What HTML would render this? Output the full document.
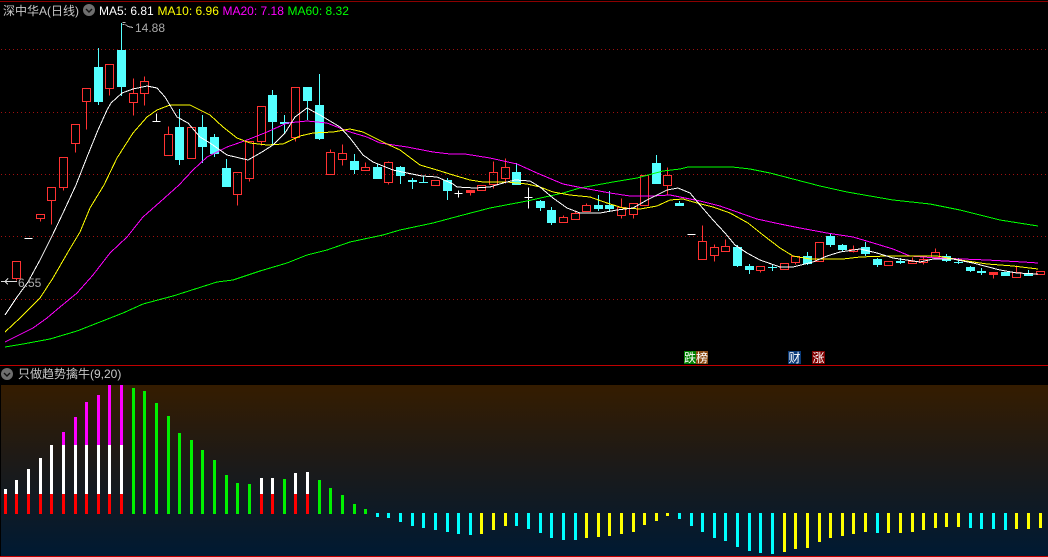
<!DOCTYPE html>
<html><head><meta charset="utf-8"><style>
html,body{margin:0;padding:0;background:#000;width:1048px;height:557px;overflow:hidden}
svg{display:block;position:absolute;left:0;top:0}
text{font-family:"Liberation Sans","WenQuanYi Zen Hei","Noto Sans CJK SC",sans-serif;font-size:12px}
</style></head><body>
<svg width="1048" height="557" viewBox="0 0 1048 557" xmlns="http://www.w3.org/2000/svg" shape-rendering="crispEdges">
<defs><linearGradient id="g" x1="0" y1="0" x2="0" y2="1"><stop offset="0" stop-color="#351c00"/><stop offset=".5" stop-color="#1a1a1a"/><stop offset="1" stop-color="#001a33"/></linearGradient></defs>
<rect width="1048" height="557" fill="#000"/>
<rect x="1" y="385" width="1047" height="171" fill="url(#g)"/>
<path d="M0 1.5H1048" stroke="#8b0000"/>
<path d="M0 365.5H1048M0 556.5H1048" stroke="#c00000"/>
<path d="M1 49.5H1048M1 112.5H1048M1 174.5H1048M1 236.5H1048M1 299.5H1048" stroke="#a01010" stroke-dasharray="1 3"/>

<!-- red candles -->
<g transform="translate(.5 .5)" fill="none" stroke="#ff3232">
<path d="M12 261H20V278H12ZM16 278V280M36 214H44V218H36ZM40 218V221M47 187H55V200H47ZM51 200V224M59 157H67V187H59ZM63 187V190M71 124H79V143H71ZM75 143V152M82 88H90V101H82ZM86 101V129M105 64H113V88H105ZM109 88V95M129 93H137V102H129ZM133 78V93M133 102V115M140 81H148V93H140ZM144 76V81M144 93V105M164 134H172V155H164ZM168 126V134M187 127H195V158H187ZM233 172H241V194H233ZM237 194V205M245 141H253V178H245ZM249 178V181M257 106H265V141H257ZM261 141V145M291 87H299V137H291ZM295 137V141M326 152H334V174H326ZM330 149V152M338 153H346V159H338ZM342 144V153M342 159V165M361 167H369V170H361ZM365 162V167M384 162H392V182H384ZM388 161V162M388 182V184M431 180H439V185H431ZM477 185H485V190H477ZM489 172H497V184H489ZM493 161V172M493 184V188M501 167H509V178H501ZM505 158V167M505 178V183M559 217H567V222H559ZM563 215V217M571 213H579V219H571ZM575 210V213M582 205H590V211H582ZM586 203V205M617 207H625V215H617ZM621 198V207M621 215V218M629 203H637V214H629ZM633 214V218M640 175H648V205H640ZM663 175H671V185H663ZM667 167V175M667 185V194M698 241H706V259H698ZM702 225V241M710 247H718V255H710ZM714 244V247M714 255V261M721 246H729V251H721ZM725 239V246M756 266H764V270H756ZM760 270V272M780 263H788V269H780ZM791 256H799V262H791ZM795 262V264M815 242H823V261H815ZM849 249H857V251H849ZM853 245V249M853 251V252M884 261H892V265H884ZM908 261H916V263H908ZM912 257V261M919 259H927V262H919ZM923 256V259M923 262V264M931 252H939V257H931ZM935 248V252M1012 272H1020V277H1012ZM1016 265V272M1036 271H1044V274H1036Z"/>
<path d="M466 190H474V192H466ZM470 192V195M989 272H997V274H989ZM993 274V278" fill="#ff3232"/>
</g>

<!-- cyan candles -->
<g transform="translate(.5 0)" fill="none" stroke="#54ffff">
<path stroke-width="9" d="M98 67V102M121 50V87M179 127V160M202 127V147M214 137V154M226 168V187M272 95V122M284 122V124M307 87V101M319 105V139M354 161V170M377 167V179M400 167V176M412 180V182M423 182V183M447 180V191M516 172V185M540 201V208M551 210V223M598 205V209M609 205V209M656 163V184M679 203V206M737 247V266M749 266V270M772 267V268M807 256V264M830 236V245M842 245V250M865 247V254M877 259V265M900 261V263M946 256V261M958 262V263M970 267V271M981 271V273M1005 272V276M1028 273V276"/>
<path d="M98 48V105M121 23V96M179 109V165M202 115V163M214 134V157M226 159V187M272 90V145M284 115V133M307 101V120M319 74V140M354 154V174M377 164V179M400 166V184M412 178V189M423 176V183M447 178V200M516 163V185M540 200V211M551 207V225M598 195V211M609 191V212M656 155V184M679 201V206M737 245V267M749 264V274M772 265V271M807 252V265M830 234V247M842 244V251M865 242V256M877 258V267M900 258V264M946 254V262M958 258V264M970 266V272M981 268V275M1028 270V276"/>
</g>

<!-- white dojis -->
<g transform="translate(.5 .5)" stroke="#fff" fill="none">
<path d="M24 238H32M152 121H160M156 113V121M454 193H462M458 190V197M524 197H532M528 187V208M687 234H695"/>
</g>

<!-- MAs -->
<g fill="none" stroke-width="1">
<polyline stroke="#00ff00" points="5,347 23,344 50,339 77,331 100,322 123,313 143,304 173,296 217,282 233,280 260,271 287,263 307,255 327,250 350,242 383,235 400,230 433,223 463,215 490,208 527,201 563,193 580,188 613,182 637,178 663,171 680,169 688,167 732,167 750,169 770,173 793,179 820,186 847,192 893,200 930,204 960,210 1000,220 1038,226"/>
<polyline stroke="#ff00ff" points="5,342 17,336 33,328 47,318 60,307 77,293 93,275 110,253 127,237 143,217 160,202 179,185 193,170 207,157 227,147 247,140 267,132 287,123 307,121 327,123 350,132 367,137 380,143 407,147 433,152 450,154 465,154 490,158 517,164 537,173 563,184 583,188 610,193 630,196 653,196 670,195 680,197 700,201 720,206 740,213 757,219 780,224 800,228 827,233 853,237 870,242 893,249 910,256 937,258 987,260 1023,262 1038,263"/>
<polyline stroke="#ffff00" points="5,332 20,318 40,298 53,278 68,252 80,232 90,208 104,185 117,158 133,133 147,117 157,110 170,105 190,105 210,115 223,127 237,138 250,143 267,145 283,144 300,136 313,133 333,132 350,129 363,132 373,137 387,144 400,150 420,165 437,170 453,175 470,180 483,182 490,182 507,182 527,184 540,187 553,192 570,195 590,197 607,203 623,208 640,209 657,206 670,200 683,199 697,203 713,207 730,213 748,223 763,235 780,248 793,256 810,259 843,259 860,257 887,256 937,256 960,260 987,264 1013,266 1038,269"/>
<polyline stroke="#ffffff" points="5,315 17,297 28,282 40,260 52,236 63,213 76,185 87,157 98,130 107,110 111,103 122,93 133,89 147,86 157,88 165,97 177,117 188,123 200,137 210,143 227,155 248,160 262,152 273,145 285,133 295,117 307,108 320,115 340,127 350,138 363,155 373,162 383,166 393,170 407,173 422,176 437,177 453,184 457,187 475,188 490,187 503,183 515,180 530,181 540,187 553,198 567,208 580,213 600,213 617,210 633,208 647,200 667,190 678,188 690,193 700,205 713,220 725,233 735,245 747,253 760,260 780,267 793,267 813,262 827,256 840,252 860,249 877,253 893,258 920,262 933,259 953,259 973,263 1000,270 1017,273 1038,274"/>
</g>

<!-- markers -->
<path d="M122.5 22.5H125.5M122.5 24.5H124.5M125.5 24.5L128 26.5L133 27.5" stroke="#bbb" fill="none"/>
<path d="M1 281.5H17M8 278.5L5 281.5L8 284.5" stroke="#ddd" fill="none"/>
<text x="135" y="32" fill="#aaa">14.88</text>
<text x="18" y="287" fill="#aaa">6.55</text>

<!-- header -->
<g shape-rendering="auto">
<text x="3" y="15" fill="#c8c8c8">深中华A(日线)</text>
<circle cx="89" cy="10" r="6" fill="#6e6e6e"/><path d="M86 9L89 12L92 9" stroke="#111" stroke-width="1.4" fill="none"/>
<text x="99" y="15" fill="#fff">MA5: 6.81</text>
<text x="157.5" y="15" fill="#ff0">MA10: 6.96</text>
<text x="222.5" y="15" fill="#f0f">MA20: 7.18</text>
<text x="287.5" y="15" fill="#0f0">MA60: 8.32</text>
<text x="18" y="378" fill="#c8c8c8">只做趋势擒牛(9,20)</text>
<circle cx="7" cy="374" r="6" fill="#6e6e6e"/><path d="M4 373L7 376L10 373" stroke="#111" stroke-width="1.4" fill="none"/>
</g>

<!-- tags -->
<rect x="684" y="351" width="12" height="13" fill="#008000"/><rect x="696" y="351" width="12" height="13" fill="#8b4c14"/>
<rect x="788" y="351" width="13" height="13" fill="#0a3a78"/><rect x="812" y="351" width="13" height="13" fill="#800000"/>
<g shape-rendering="auto" fill="#fff">
<text x="684" y="362">跌榜</text><text x="788.5" y="362">财</text><text x="812.5" y="362">涨</text>
</g>

<!-- indicator bars -->
<g transform="translate(.5 0)" fill="none" stroke-width="3">
<path stroke="#ff0000" d="M5 494V514M16 494V514M28 494V514M40 494V514M51 494V514M63 494V514M75 494V514M86 494V514M98 494V514M109 494V514M121 494V514M261 494V514M272 494V514M295 494V514M307 494V514"/>
<path stroke="#ffffff" d="M5 489V494M16 480V494M28 469V494M40 458V494M51 445V494M63 445V494M75 445V494M86 445V494M98 445V494M109 445V494M121 445V494M261 478V494M272 478V494M295 473V494M307 472V494"/>
<path stroke="#ff00ff" d="M63 432V445M75 417V445M86 402V445M98 395V445M109 385V445M121 385V445"/>
<path stroke="#00f000" d="M133 388V514M144 391V514M156 403V514M168 416V514M179 433V514M191 440V514M202 450V514M214 460V514M226 475V514M237 483V514M249 484V514M284 479V514M319 480V514M330 488V514M342 495V514M354 504V514M365 509V514"/>
<path stroke="#00ffff" d="M377 513V517M388 513V518M400 513V522M412 513V526M423 513V528M435 513V530M447 513V532M458 513V534M470 513V535M516 513V526M528 513V529M540 513V533M551 513V538M563 513V540M575 513V540M679 513V519M691 513V526M702 513V532M714 513V538M725 513V541M737 513V547M749 513V551M760 513V553M772 513V554M877 513V533M970 513V528M981 513V529M993 513V529M1005 513V530"/>
<path stroke="#ffff00" d="M481 513V534M493 513V530M505 513V526M586 513V538M598 513V537M609 513V536M621 513V534M633 513V532M644 513V525M656 513V521M667 513V516M784 513V552M795 513V549M807 513V548M819 513V542M830 513V538M842 513V536M853 513V534M865 513V532M888 513V533M900 513V533M912 513V532M923 513V530M935 513V528M946 513V527M958 513V527M1016 513V529M1028 513V529M1040 513V528"/>
</g>
</svg>
</body></html>
